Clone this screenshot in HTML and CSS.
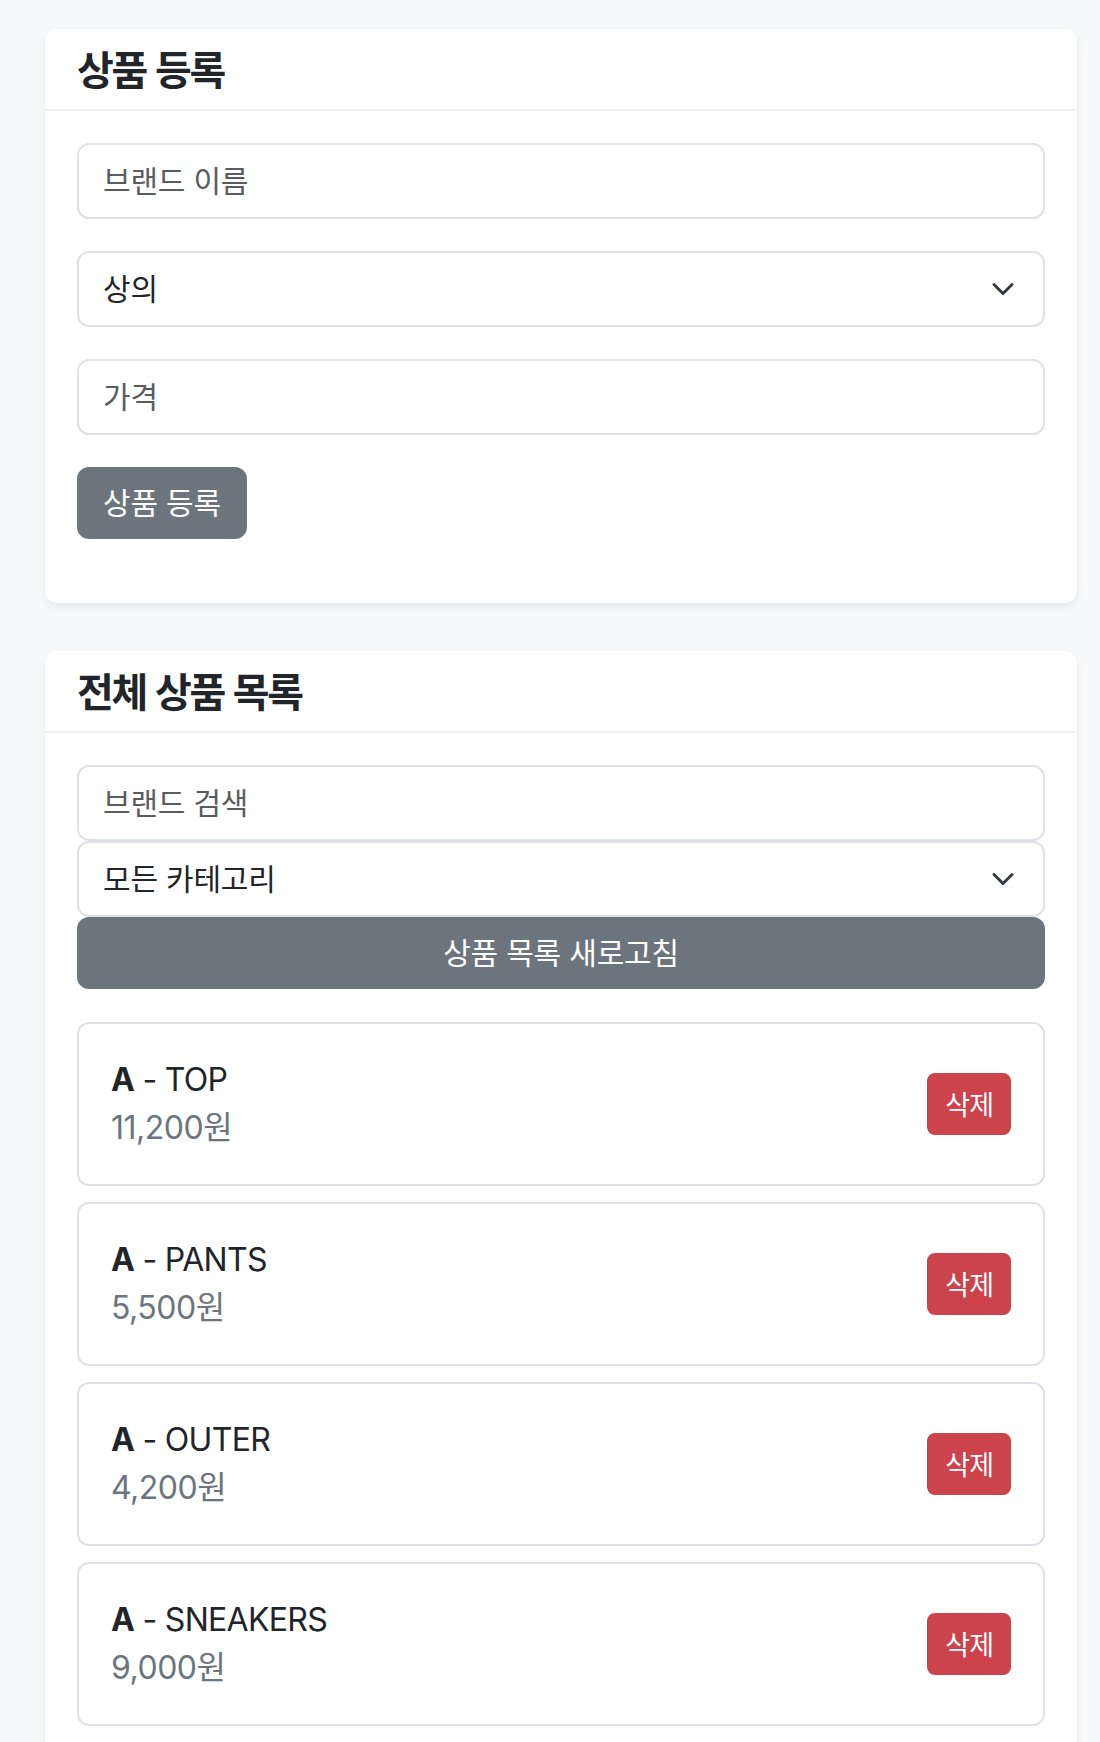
FILE: index.html
```html
<!DOCTYPE html>
<html lang="ko">
<head>
<meta charset="utf-8">
<title>상품 관리</title>
<link rel="stylesheet" href="styles.css">
</head>
<body>
<main class="page">
  <section class="panel">
    <header class="panel-head">
      <h2 class="panel-title">상품 등록</h2>
    </header>
    <div class="panel-body">
      <form class="reg-form">
        <input class="field" type="text" placeholder="브랜드 이름">
        <div class="select-wrap">
          <select class="field select">
            <option>상의</option>
            <option>아우터</option>
            <option>바지</option>
            <option>스니커즈</option>
          </select>
          <svg class="chev" width="32" height="24" viewBox="0 0 16 16" aria-hidden="true"><path d="m2 5 6 6 6-6" fill="none" stroke="#343a40" stroke-width="2" stroke-linecap="round" stroke-linejoin="round"/></svg>
        </div>
        <input class="field" type="text" placeholder="가격">
        <button class="btn btn-reg" type="button">상품 등록</button>
      </form>
    </div>
  </section>

  <section class="panel">
    <header class="panel-head">
      <h2 class="panel-title">전체 상품 목록</h2>
    </header>
    <div class="panel-body">
      <div class="filter">
        <input class="field" type="text" placeholder="브랜드 검색">
        <div class="select-wrap">
          <select class="field select">
            <option>모든 카테고리</option>
            <option>상의</option>
          </select>
          <svg class="chev" width="32" height="24" viewBox="0 0 16 16" aria-hidden="true"><path d="m2 5 6 6 6-6" fill="none" stroke="#343a40" stroke-width="2" stroke-linecap="round" stroke-linejoin="round"/></svg>
        </div>
        <button class="btn btn-block" type="button">상품 목록 새로고침</button>
      </div>
      <ul class="item-list">
        <li class="item">
          <div class="item-info">
            <div class="item-name"><strong>A</strong> - TOP</div>
            <div class="item-price">11,200원</div>
          </div>
          <button class="btn-del" type="button">삭제</button>
        </li>
        <li class="item">
          <div class="item-info">
            <div class="item-name"><strong>A</strong> - PANTS</div>
            <div class="item-price">5,500원</div>
          </div>
          <button class="btn-del" type="button">삭제</button>
        </li>
        <li class="item">
          <div class="item-info">
            <div class="item-name"><strong>A</strong> - OUTER</div>
            <div class="item-price">4,200원</div>
          </div>
          <button class="btn-del" type="button">삭제</button>
        </li>
        <li class="item">
          <div class="item-info">
            <div class="item-name"><strong>A</strong> - SNEAKERS</div>
            <div class="item-price">9,000원</div>
          </div>
          <button class="btn-del" type="button">삭제</button>
        </li>
        <li class="item">
          <div class="item-info">
            <div class="item-name"><strong>A</strong> - BAG</div>
            <div class="item-price">2,000원</div>
          </div>
          <button class="btn-del" type="button">삭제</button>
        </li>
      </ul>
    </div>
  </section>
</main>
</body>
</html>
```

FILE: styles.css
```css
body {
  margin: 0;
  background: #f8f9fa;
  font-family: Inter, "Noto Sans CJK KR", sans-serif;
  color: #212529;
}

.page {
  padding: 29px 23px 0 45px;
}

.panel {
  background: #fff;
  border-radius: 12px;
  box-shadow: 0 4px 8px rgba(0, 0, 0, 0.075);
  margin-bottom: 48px;
}

.panel-head {
  padding: 15px 32px 17px;
  border-bottom: 2px solid rgba(0, 0, 0, 0.06);
}

.panel-title {
  margin: 0;
  font-family: "Noto Sans CJK KR", sans-serif;
  font-size: 40px;
  line-height: 48px;
  font-weight: 700;
  letter-spacing: -2.3px;
}

.panel-body {
  padding: 32px;
}

.reg-form {
  display: flex;
  flex-direction: column;
  gap: 32px;
  margin: 0;
  padding-bottom: 32px;
}

.field {
  display: block;
  box-sizing: border-box;
  width: 100%;
  height: 76px;
  margin: 0;
  padding: 0 24px;
  border: 2px solid #dee2e6;
  border-radius: 12px;
  background: #fff;
  color: #212529;
  font-family: Inter, "Noto Sans CJK KR", sans-serif;
  font-size: 30px;
  line-height: 48px;
  letter-spacing: -0.2px;
  outline: none;
}

.field::placeholder {
  color: #595c5f;
  opacity: 1;
}

.select {
  appearance: none;
  -webkit-appearance: none;
}

.select-wrap {
  position: relative;
}

.chev {
  position: absolute;
  right: 26px;
  top: 50%;
  transform: translateY(-50%);
  pointer-events: none;
}

.btn {
  box-sizing: border-box;
  height: 72px;
  margin: 0;
  padding: 0 24px;
  border: 2px solid #6c757d;
  border-radius: 12px;
  background: #6c757d;
  color: #fff;
  font-family: Inter, "Noto Sans CJK KR", sans-serif;
  font-size: 30px;
  line-height: 48px;
  letter-spacing: -0.2px;
}

.btn-reg {
  align-self: flex-start;
}

.btn-block {
  display: block;
  width: 100%;
}

.filter {
  display: flex;
  flex-direction: column;
}

.item-list {
  list-style: none;
  margin: 33px 0 0;
  padding: 0;
  display: flex;
  flex-direction: column;
  gap: 16px;
}

.item {
  display: flex;
  align-items: center;
  justify-content: space-between;
  padding: 32px;
  border: 2px solid #dee2e6;
  border-radius: 12px;
}

.item-name {
  font-size: 32px;
  line-height: 48px;
  letter-spacing: -0.7px;
}

.item-name strong {
  font-weight: 700;
}

.item-price {
  font-size: 32px;
  line-height: 48px;
  letter-spacing: -0.5px;
  color: #6c757d;
}

.btn-del {
  box-sizing: border-box;
  height: 62px;
  margin: 0;
  padding: 0 16px;
  border: 2px solid #cc434b;
  border-radius: 8px;
  background: #cc434b;
  color: #fff;
  font-family: "Noto Sans CJK KR", sans-serif;
  font-size: 27px;
  line-height: 40px;
  letter-spacing: -1px;
}
```
